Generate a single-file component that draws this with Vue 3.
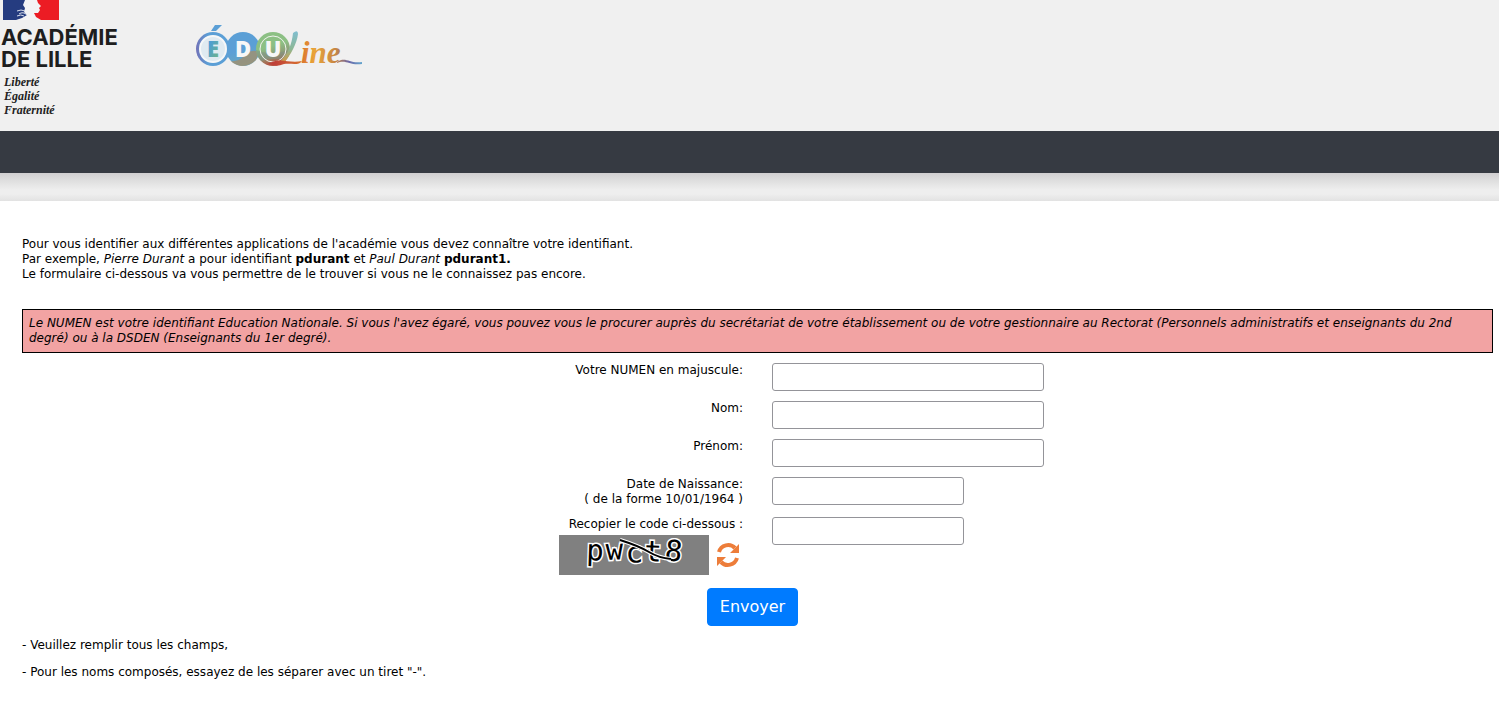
<template>
    <div class="page">
        <header class="banner">
            <svg class="logo-academie" width="120" height="120" viewBox="0 0 120 120" role="img" aria-label="Académie de Lille">
                <rect x="3" y="0" width="29" height="20" fill="#253c80" />
                <rect x="32" y="0" width="27" height="20" fill="#ec1c24" />
                <path d="M25 0 H37 L38 3 L41 6 L39 8 L40 10 L38 13 L34 13 L36 17 L41 20 H16 L22 18 L27 15 L24 12 L25 8 L23 5 Z" fill="#f3f3f5" />
                <path d="M17 11 Q21 9 25 11 M19 14 Q23 11 27 15 M17 16 Q21 14 24 16" fill="none" stroke="#d9deec" stroke-width="1" />
                <g class="academie-name">
                    <text x="1" y="45">ACADÉMIE</text>
                    <text x="1" y="67">DE LILLE</text>
                </g>
                <g class="academie-motto">
                    <text x="4" y="86">Liberté</text>
                    <text x="4" y="100">Égalité</text>
                    <text x="4" y="114">Fraternité</text>
                </g>
            </svg>
            <svg class="logo-eduline" width="170" height="50" viewBox="0 0 170 50" role="img" aria-label="Éduline">
                <defs>
                    <linearGradient id="blue" x1="0" y1="0" x2="0.300" y2="1">
                        <stop offset="0.600" stop-color="#5b9fd6" />
                        <stop offset="1" stop-color="#68a7c0" />
                    </linearGradient>
                    <linearGradient id="ring" x1="0" y1="0" x2="1" y2="0">
                        <stop offset="0" stop-color="#7272b8" />
                        <stop offset="0.350" stop-color="#5b9fd6" />
                    </linearGradient>
                    <linearGradient id="green" x1="0" y1="0" x2="0.300" y2="1">
                        <stop offset="0.500" stop-color="#8cc084" />
                        <stop offset="0.750" stop-color="#8d9d78" />
                        <stop offset="1" stop-color="#b5523f" />
                    </linearGradient>
                    <linearGradient id="letter" x1="0" y1="0" x2="1" y2="1">
                        <stop offset="0.300" stop-color="#4d9ed3" />
                        <stop offset="1" stop-color="#74b879" />
                    </linearGradient>
                    <linearGradient id="stroke" gradientUnits="userSpaceOnUse" x1="80" y1="0" x2="167" y2="0">
                        <stop offset="0" stop-color="#bf4038" />
                        <stop offset="0.300" stop-color="#d9702e" />
                        <stop offset="0.450" stop-color="#e9a53a" />
                        <stop offset="0.700" stop-color="#c78543" />
                        <stop offset="0.850" stop-color="#6a67a8" />
                        <stop offset="1" stop-color="#64a6ce" />
                    </linearGradient>
                    <linearGradient id="tall" x1="0" y1="0" x2="0" y2="1">
                        <stop offset="0" stop-color="#80bed0" />
                        <stop offset="0.550" stop-color="#8cb794" />
                        <stop offset="1" stop-color="#df9438" />
                    </linearGradient>
                </defs>
                <circle cx="18" cy="29" r="17" fill="url(#ring)" />
                <circle cx="48" cy="29" r="17" fill="url(#blue)" />
                <path d="M47 38 Q55 28 64 32 L61 40 Q55 46 46 46 Q38 44 36 41 Q42 42 47 38 Z" fill="#a98c62" opacity="0.700" />
                <circle cx="78" cy="29" r="17" fill="url(#green)" />
                <path d="M61 30 Q70 34 78 33 T95 31 Q94 38 90 41 Q78 37 66 41 Q62 37 61 30 Z" fill="#7d9287" opacity="0.500" />
                <circle cx="18" cy="29" r="13" fill="#dfeaf1" stroke="#f5f7f8" stroke-width="2" />
                <path d="M16 11 L20 5 H27 L21 11 Z" fill="#5b9fd6" />
                <circle cx="78" cy="29" r="13" fill="none" stroke="#f1f3ee" stroke-width="1" />
                <g class="eduline-letters">
                    <text x="18" y="37" fill="url(#letter)">E</text>
                    <text x="48" y="37" fill="#f7f7f7">D</text>
                    <text x="78" y="37" fill="#f7f7f7">U</text>
                </g>
                <path d="M98 13 Q103 9 103 14 C102 23 96 35 88 44 L84 43 C93 34 97 24 98 13 Z" fill="url(#tall)" />
                <path d="M75 43 C86 37 94 44 107 41 C104 46 96 43 89 44 Q80 48 73 43 Z" fill="url(#stroke)" />
                <text class="eduline-script" x="106" y="43" fill="url(#stroke)">ine</text>
                <path d="M142 42 C151 36 154 44 167 42 V44 C155 46 151 39 142 43 Z" fill="url(#stroke)" />
            </svg>
        </header>
        <nav class="navbar" aria-label="Navigation principale"></nav>
        <div class="separator"></div>

        <main class="content">
            <p class="intro">
                Pour vous identifier aux différentes applications de l'académie vous devez connaître votre identifiant.<br>
                Par exemple, <i>Pierre Durant</i> a pour identifiant <b>pdurant</b> et <i>Paul Durant</i> <b>pdurant1.</b><br>
                Le formulaire ci-dessous va vous permettre de le trouver si vous ne le connaissez pas encore.
            </p>
            <p class="notice">
                Le NUMEN est votre identifiant Education Nationale. Si vous l'avez égaré, vous pouvez vous le procurer auprès du secrétariat de votre établissement ou de votre gestionnaire au Rectorat (Personnels administratifs et enseignants du 2nd degré) ou à la DSDEN (Enseignants du 1er degré).
            </p>

            <form @submit.prevent="envoyer">
                <div v-for="champ in champs" :key="champ.id" class="form-row">
                    <label :for="champ.id">{{ champ.label }}<template v-if="champ.aide"><br>{{ champ.aide }}</template></label>
                    <div class="field">
                        <input :id="champ.id" v-model="form[champ.id]" type="text" :class="{ court: champ.court }">
                    </div>
                </div>
                <div class="form-row">
                    <div class="code">
                        <label for="code">Recopier le code ci-dessous :</label>
                        <div class="captcha">
                            <svg width="150" height="40" viewBox="0 0 150 40" role="img" aria-label="Code de sécurité">
                                <rect width="150" height="40" fill="#808080" />
                                <g class="captcha-text">
                                    <text x="27 47 67 85 105" y="25 25 28 26 25" rotate="2 -2 -3 2 6">pwct8</text>
                                </g>
                                <path d="M61 5 Q80 11 90 17 T112 24" fill="none" stroke="#fff" stroke-width="4" />
                                <path d="M61 5 Q80 11 90 17 T112 24" fill="none" stroke="#000" stroke-width="2" />
                            </svg>
                            <button type="button" class="refresh" aria-label="Changer le code">
                                <svg width="24" height="26" viewBox="0 0 24 26">
                                    <path d="M3 10 A9.500 9.500 0 0 1 19 6 M21 16 A9.500 9.500 0 0 1 5 20" fill="none" stroke="#ed7d3a" stroke-width="4" />
                                    <path d="M23 2 V11 H14 Z M1 24 V15 H10 Z" fill="#ed7d3a" />
                                </svg>
                            </button>
                        </div>
                    </div>
                    <div class="field">
                        <input id="code" v-model="form.code" type="text" class="court">
                    </div>
                </div>
                <div class="actions">
                    <button type="submit" class="btn-primary">Envoyer</button>
                </div>
            </form>

            <p class="note">- Veuillez remplir tous les champs,</p>
            <p class="note">- Pour les noms composés, essayez de les séparer avec un tiret "-".</p>
        </main>
    </div>
</template>

<script setup>
import { ref } from 'vue';

const champs = [
    { id: 'numen', label: 'Votre NUMEN en majuscule:' },
    { id: 'nom', label: 'Nom:' },
    { id: 'prenom', label: 'Prénom:' },
    { id: 'naissance', label: 'Date de Naissance:', aide: '( de la forme 10/01/1964 )', court: true }
];

const form = ref({ numen: '', nom: '', prenom: '', naissance: '', code: '' });

function envoyer() {
    form.value.numen = form.value.numen.trim().toUpperCase();
}
</script>

<style>
body {
    margin: 0;
    background-color: #fff;
}
</style>

<style scoped>
.page {
    font-family: Verdana, "DejaVu Sans", sans-serif;
    font-size: 12px;
    line-height: 15px;
    color: #000;
}

/* Header */
.banner {
    display: flex;
    align-items: flex-start;
    gap: 75px;
    padding-bottom: 11px;
    background-color: #f0f0f0;
}

.banner svg {
    display: block;
}

.logo-eduline {
    margin-top: 20px;
}

.academie-name {
    font-family: Inter, sans-serif;
    font-size: 22px;
    font-weight: 700;
    fill: #1e1e1e;
}

.academie-motto {
    font-family: "Liberation Serif", serif;
    font-size: 12px;
    font-style: italic;
    font-weight: 700;
    fill: #222;
}

.eduline-letters {
    font-family: "Open Sans", sans-serif;
    font-size: 22px;
    font-weight: 800;
    text-anchor: middle;
}

.eduline-script {
    font-family: "Liberation Serif", serif;
    font-size: 31px;
    font-style: italic;
    font-weight: 700;
}

.navbar {
    height: 42px;
    background-color: #363a42;
}

.separator {
    height: 28px;
    background: linear-gradient(#d0ced0, #e0e0e0 30%, #eee 60%, #eee 75%, #e2e2e2);
}

/* Content */
.content {
    padding: 36px 6px 24px 22px;
}

.intro {
    margin: 0 0 27px;
}

.notice {
    margin: 0 0 10px;
    padding: 6px;
    border: 1px solid #000;
    background-color: #f2a3a3;
    font-style: italic;
}

.form-row {
    display: grid;
    grid-template-columns: 1fr 1fr;
    column-gap: 29px;
    margin-bottom: 10px;
    text-align: right;
}

.field {
    text-align: left;
}

input {
    display: block;
    box-sizing: border-box;
    width: 272px;
    max-width: 100%;
    height: 28px;
    padding: 2px 6px;
    border: 1px solid #949499;
    border-radius: 3px;
    background-color: #fff;
    font: inherit;
}

input.court {
    width: 192px;
}

.captcha {
    display: flex;
    justify-content: flex-end;
    align-items: center;
    gap: 7px;
    margin-top: 3px;
}

.captcha svg {
    display: block;
}

.captcha-text {
    font-family: "DejaVu Sans Mono", monospace;
    font-size: 29px;
    fill: #000;
    stroke: #fff;
    stroke-width: 3px;
    paint-order: stroke;
}

.refresh {
    padding: 0;
    border: 0;
    margin-right: 3px;
    background: none;
    cursor: pointer;
}

.actions {
    display: flex;
    justify-content: center;
    margin: 13px 10px 12px 0;
}

.btn-primary {
    padding: 6px 12px;
    border: 1px solid #007bff;
    border-radius: 4px;
    background-color: #007bff;
    color: #fff;
    font-family: inherit;
    font-size: 16px;
    line-height: 24px;
    cursor: pointer;
}

.note {
    margin: 0 0 12px;
}
</style>
